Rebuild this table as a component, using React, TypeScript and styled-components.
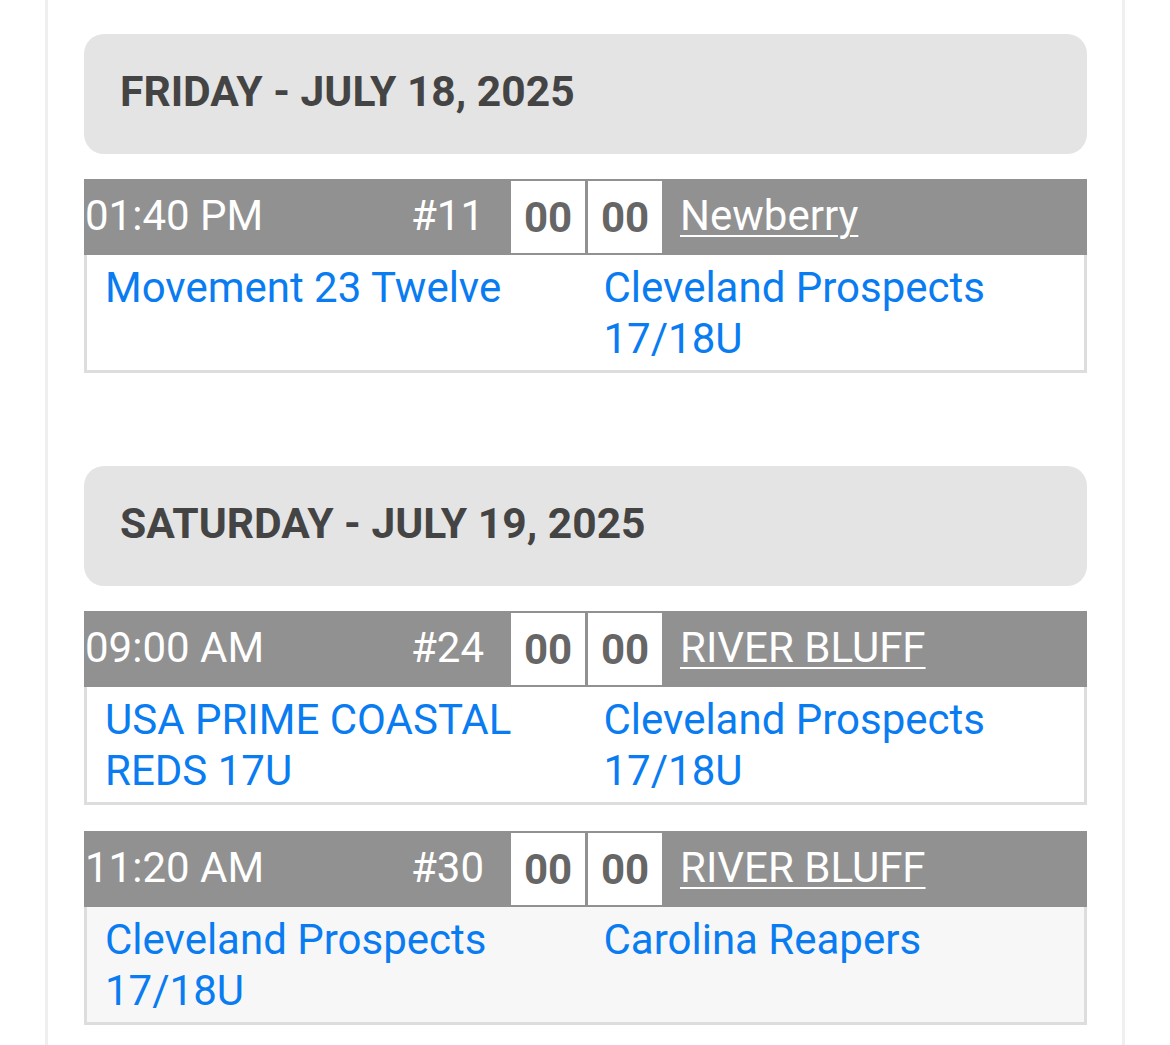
import React from "react";
import styled, { createGlobalStyle } from "styled-components";

const Global = createGlobalStyle`
  html, body { margin: 0; padding: 0; background: #ffffff; }
  body { font-family: Roboto, "Liberation Sans", Arial, sans-serif; }
`;

const Page = styled.div`
  margin-left: 45px;
  width: 1080px;
  box-sizing: border-box;
  min-height: 100vh;
  border-left: 3px solid #efefef;
  border-right: 3px solid #efefef;
  padding: 34px 35px 40px 36px;
`;

const Day = styled.section`
  display: flex;
  flex-direction: column;
  gap: 25px;
  & + & { margin-top: 93px; }
`;

const DateHeader = styled.h2`
  margin: 0;
  height: 120px;
  box-sizing: border-box;
  display: flex;
  align-items: center;
  padding: 0 0 6px 36px;
  background: #e4e4e4;
  border-radius: 20px;
  color: #444444;
  font-size: 42.6px;
  font-weight: 700;
`;

const Game = styled.div`
  display: flex;
  flex-direction: column;
  & + & { margin-top: 1px; }
`;

const GameHeader = styled.div`
  height: 76px;
  box-sizing: border-box;
  padding-bottom: 4px;
  display: flex;
  align-items: stretch;
  background: #919191;
  color: #ffffff;
  font-size: 42px;
`;

const Time = styled.div`
  width: 326px;
  padding-left: 1px;
  display: flex;
  align-items: center;
`;

const Num = styled.div`
  width: 100px;
  display: flex;
  align-items: center;
`;

const Score = styled.div`
  width: 74px;
  margin: 2px 3px -2px 0;
  background: #ffffff;
  color: #666666;
  font-weight: 700;
  display: flex;
  align-items: center;
  justify-content: center;
`;

const Field = styled.a`
  margin-left: 15px;
  display: flex;
  align-items: center;
  color: #ffffff;
  text-decoration: underline;
  text-decoration-thickness: 2px;
  text-underline-offset: 5px;
`;

const GameBody = styled.div<{ $alt?: boolean }>`
  display: grid;
  grid-template-columns: 1fr 1fr;
  background: ${(p) => (p.$alt ? "#f7f7f7" : "#ffffff")};
  border: 3px solid #dddddd;
  border-top: none;
  padding: 7px 0 6px;
`;

const Team = styled.a`
  padding: 0 18px;
  color: #0a7cf2;
  text-decoration: none;
  font-size: 42px;
  line-height: 51px;
`;

type G = { time: string; num: string; field: string; a: string; b: string };

const days: { date: string; games: G[] }[] = [
  {
    date: "FRIDAY - JULY 18, 2025",
    games: [
      { time: "01:40 PM", num: "#11", field: "Newberry", a: "Movement 23 Twelve", b: "Cleveland Prospects 17/18U" },
    ],
  },
  {
    date: "SATURDAY - JULY 19, 2025",
    games: [
      { time: "09:00 AM", num: "#24", field: "RIVER BLUFF", a: "USA PRIME COASTAL REDS 17U", b: "Cleveland Prospects 17/18U" },
      { time: "11:20 AM", num: "#30", field: "RIVER BLUFF", a: "Cleveland Prospects 17/18U", b: "Carolina Reapers" },
    ],
  },
];

export default function App() {
  return (
    <>
      <Global />
      <Page>
        {days.map((d) => (
          <Day key={d.date}>
            <DateHeader>{d.date}</DateHeader>
            {d.games.map((g, i) => (
              <Game key={g.num}>
                <GameHeader>
                  <Time>{g.time}</Time>
                  <Num>{g.num}</Num>
                  <Score>00</Score>
                  <Score>00</Score>
                  <Field href="#">{g.field}</Field>
                </GameHeader>
                <GameBody $alt={i % 2 === 1}>
                  <Team href="#">{g.a}</Team>
                  <Team href="#">{g.b}</Team>
                </GameBody>
              </Game>
            ))}
          </Day>
        ))}
      </Page>
    </>
  );
}
